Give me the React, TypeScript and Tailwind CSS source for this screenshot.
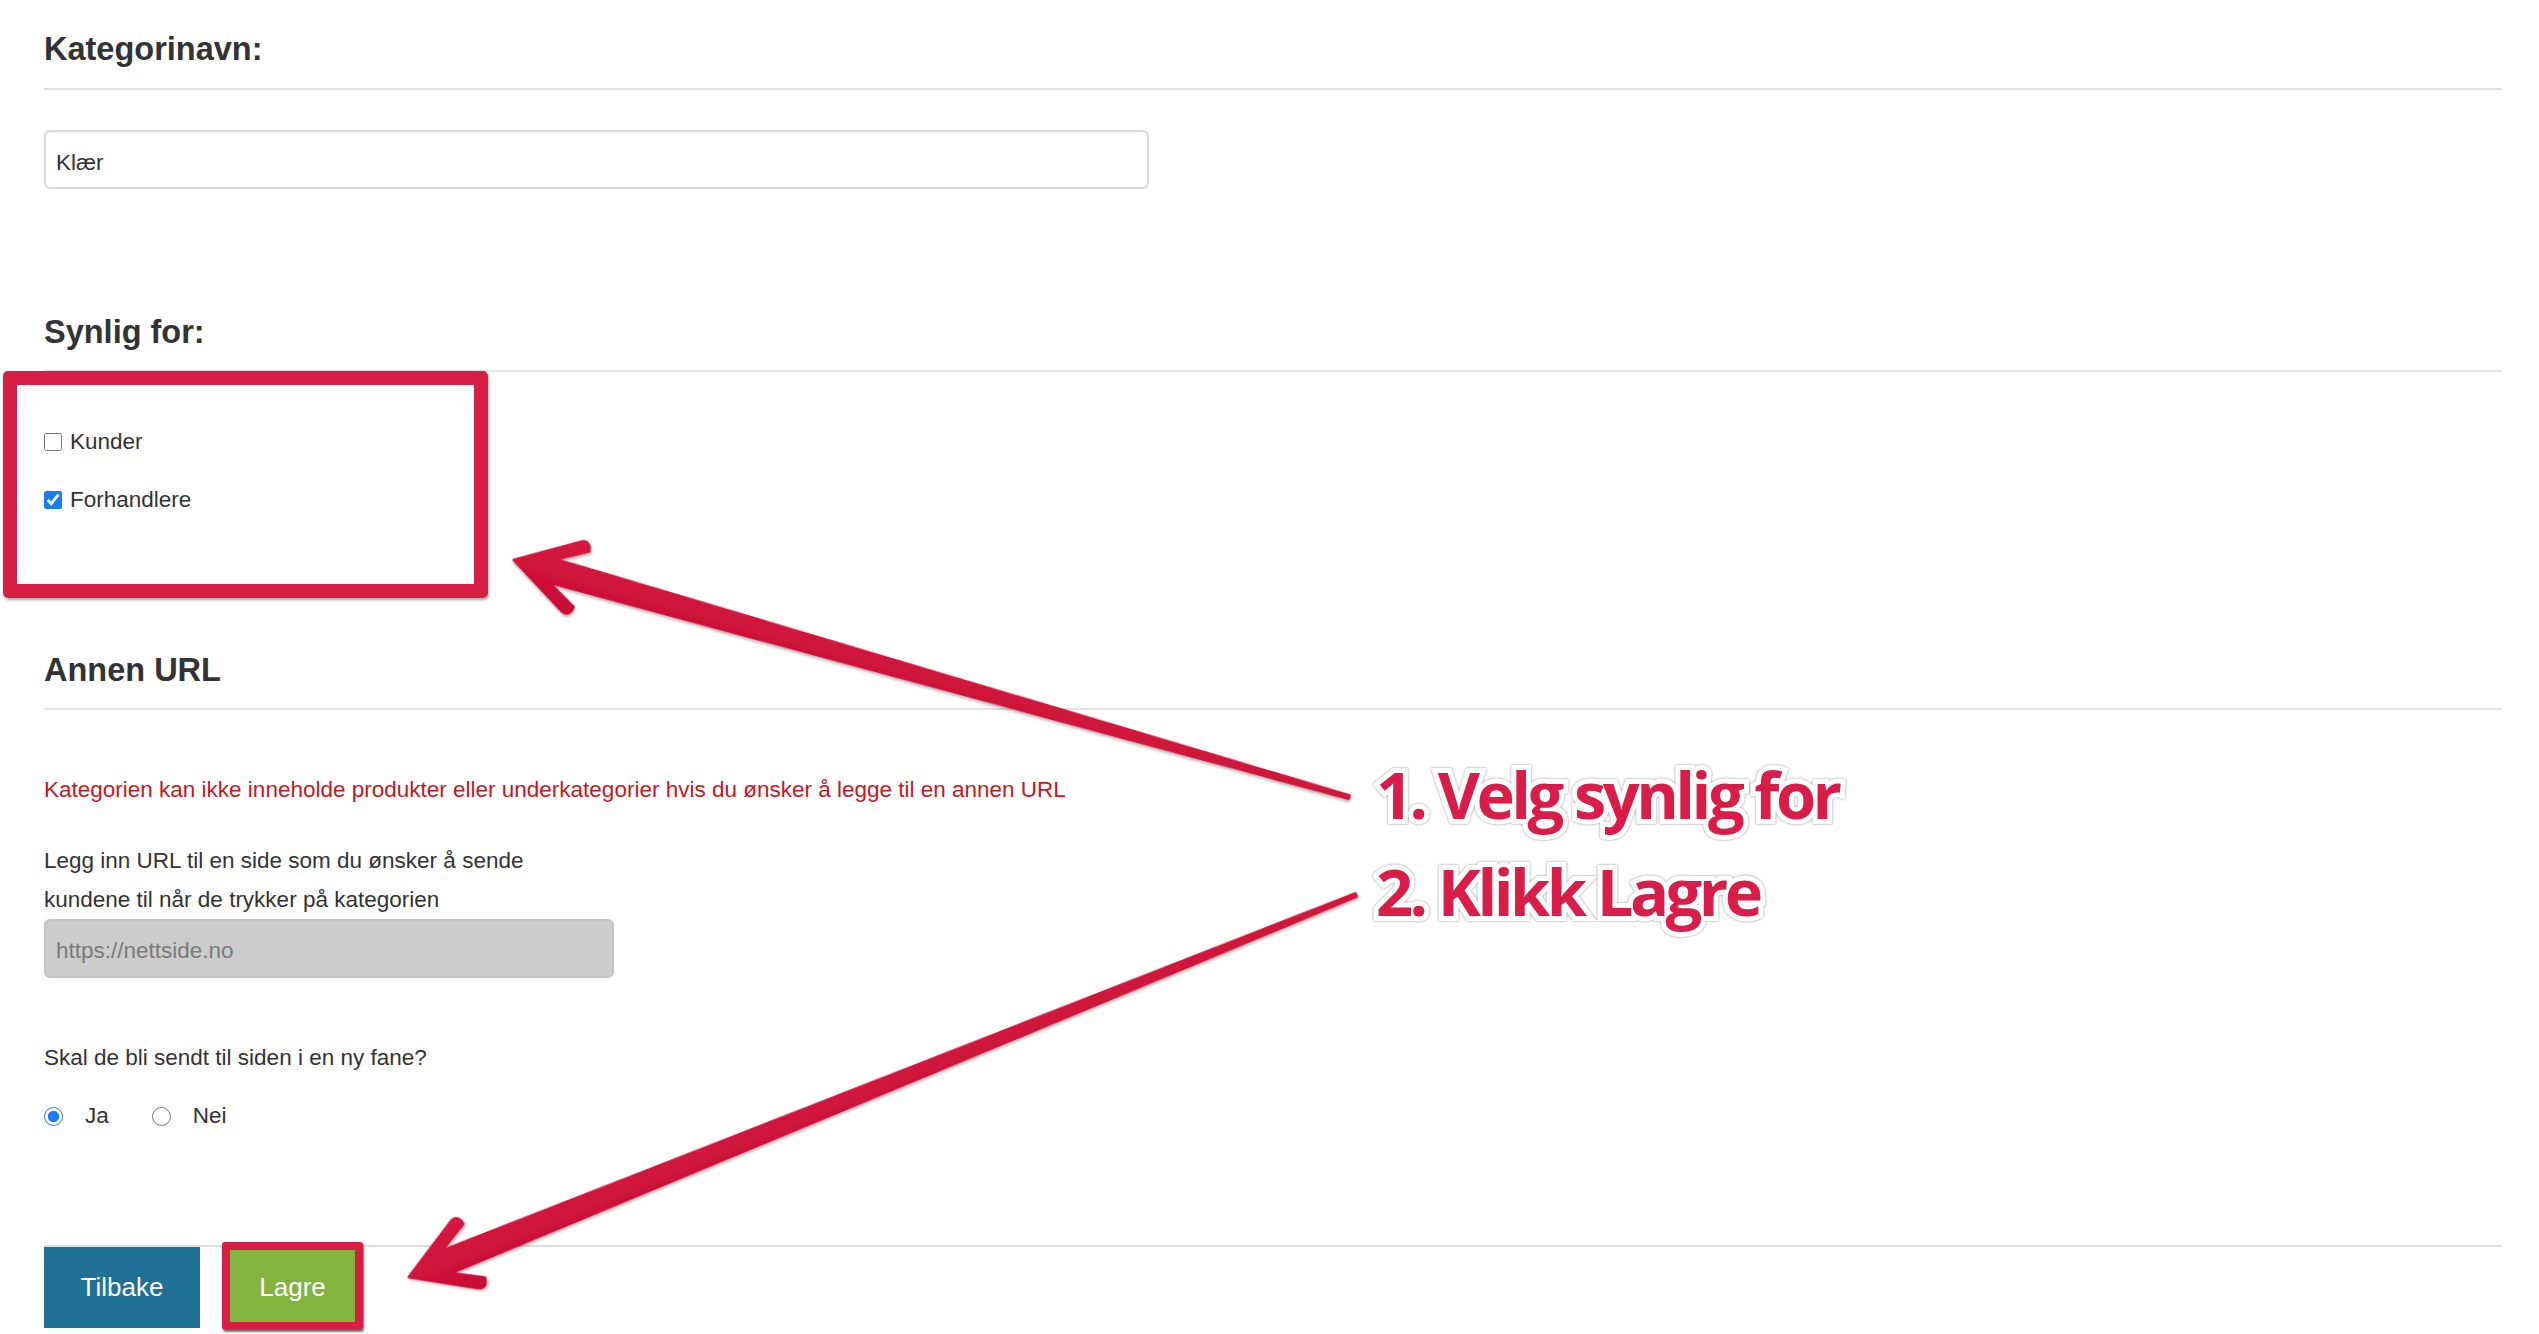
import React from "react";

function Arrow({ x, y, angle, length }: { x: number; y: number; angle: number; length: number }) {
  const L = length;
  const d = `M0,0 L60,-36 Q66,-39 69,-33 L70,-29 L40,-12 L${L},-1.5 L${L},1.5 L40,12 L70,29 L69,33 Q66,39 60,36 Z`;
  return (
    <g transform={`translate(${x} ${y}) rotate(${angle})`} filter="url(#ashadow)">
      <path d={d} fill="url(#agrad)" stroke="url(#agrad)" strokeWidth={3} strokeLinejoin="round" />
    </g>
  );
}

export default function App() {
  return (
    <div className="relative w-full min-h-[1334px] bg-white font-['Liberation_Sans',Arial,sans-serif] text-[#333] overflow-hidden">
      <div className="pl-[44px] pr-[37px] pt-[31px]">
        {/* Kategorinavn */}
        <h2 className="text-[32.5px] leading-[36px] font-bold text-[#333]">Kategorinavn:</h2>
        <div className="mt-[21px] h-[2px] bg-[#dedede]" />
        <div className="mt-[40px] w-[1105px] h-[59px] rounded-[6px] border-2 border-[#d9d9d9] bg-white flex items-center pl-[10px] pt-[6px] text-[22.5px] text-[#333] shadow-[inset_0_1px_2px_rgba(0,0,0,0.06)]">
          Klær
        </div>

        {/* Synlig for */}
        <h2 className="mt-[125px] text-[32.5px] leading-[36px] font-bold text-[#333]">Synlig for:</h2>
        <div className="mt-[20px] h-[2px] bg-[#e3e3e3]" />
        <div className="mt-[56px] flex flex-col gap-[30px] text-[22.5px]">
          <label className="flex items-center h-[28px] gap-[8px]">
            <input type="checkbox" readOnly className="w-[18px] h-[18px] m-0 accent-[#1b7bf0]" />
            <span>Kunder</span>
          </label>
          <label className="flex items-center h-[28px] gap-[8px]">
            <input type="checkbox" readOnly checked className="w-[18px] h-[18px] m-0 accent-[#1b7bf0]" />
            <span>Forhandlere</span>
          </label>
        </div>

        {/* Annen URL */}
        <h2 className="mt-[138px] text-[32.5px] leading-[36px] font-bold text-[#333]">Annen URL</h2>
        <div className="mt-[20px] h-[2px] bg-[#e3e3e3]" />
        <p className="mt-[66px] text-[22.5px] leading-[28px] text-[#c8161f]">
          Kategorien kan ikke inneholde produkter eller underkategorier hvis du ønsker å legge til en annen URL
        </p>
        <p className="mt-[37px] text-[22.5px] leading-[39px] text-[#333]">
          Legg inn URL til en side som du ønsker å sende
          <br />
          kundene til når de trykker på kategorien
        </p>
        <div className="w-[570px] h-[59px] rounded-[6px] border-2 border-[#c4c4c4] bg-[#cccccc] flex items-center pl-[10px] pt-[4px] text-[22.5px] text-[#7a7a7a]">
          https://nettside.no
        </div>

        <p className="mt-[66px] text-[22.5px] leading-[28px] text-[#333]">Skal de bli sendt til siden i en ny fane?</p>
        <div className="mt-[30px] flex items-center h-[28px] text-[22.5px]">
          <input type="radio" name="nf" readOnly checked className="w-[19px] h-[19px] m-0 accent-[#1b7bf0]" />
          <span className="ml-[22px]">Ja</span>
          <input type="radio" name="nf" readOnly className="ml-[43px] w-[19px] h-[19px] m-0 accent-[#1b7bf0]" />
          <span className="ml-[22px]">Nei</span>
        </div>

        <div className="mt-[115px] h-[2px] bg-[#dedede]" />
        <div className="flex gap-[24px]">
          <button className="w-[156px] h-[81px] bg-[#1f7196] text-white text-[26px]">Tilbake</button>
          <div className="relative">
            <button className="w-[137px] h-[81px] bg-[#83b440] text-white text-[26px]">Lagre</button>
            <div className="absolute left-[-2px] top-[-5px] w-[141px] h-[88px] border-[8px] border-[#d81e45] rounded-[3px] shadow-[1px_2px_2px_rgba(0,0,0,0.55)] pointer-events-none" />
          </div>
        </div>
      </div>

      {/* Annotation box around checkboxes */}
      <div className="absolute left-[3px] top-[371px] w-[485px] h-[227px] border-[14px] border-[#d81e45] rounded-[5px] shadow-[1px_2px_3px_rgba(0,0,0,0.35)] pointer-events-none" />

      {/* Arrows */}
      <svg className="absolute inset-0 pointer-events-none" width="2539" height="1334" viewBox="0 0 2539 1334">
        <defs>
          <linearGradient id="agrad" x1="0" y1="-1" x2="0" y2="1" gradientUnits="objectBoundingBox">
            <stop offset="0" stopColor="#e2234c" />
            <stop offset="1" stopColor="#c90d35" />
          </linearGradient>
          <filter id="ashadow" x="-10%" y="-10%" width="120%" height="120%">
            <feDropShadow dx="1" dy="2" stdDeviation="1.5" floodColor="#000" floodOpacity="0.3" />
          </filter>
        </defs>
        <Arrow x={514} y={560} angle={15.85} length={868} />
        <Arrow x={409} y={1277} angle={-21.97} length={1021} />
      </svg>

      {/* Annotation text */}
      <div className="absolute left-[1376px] top-[746px] font-['Open_Sans',sans-serif] font-bold text-[65px] leading-[97px] tracking-[-0.055em] text-[#d81e48] [-webkit-text-stroke:10px_white] [paint-order:stroke_fill] [filter:drop-shadow(0_0_1px_rgba(0,0,0,0.45))] whitespace-nowrap pointer-events-none">
        <div>1. Velg synlig for</div>
        <div>2. Klikk Lagre</div>
      </div>
    </div>
  );
}
